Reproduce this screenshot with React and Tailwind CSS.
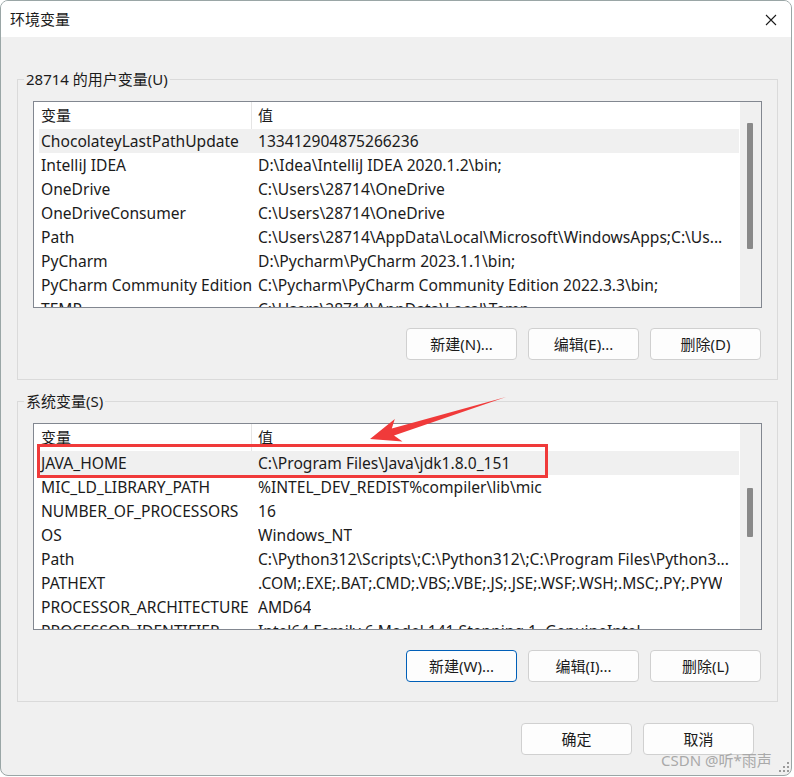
import React from 'react'

const userVars = [
  ['ChocolateyLastPathUpdate', '133412904875266236'],
  ['IntelliJ IDEA', 'D:\\Idea\\IntelliJ IDEA 2020.1.2\\bin;'],
  ['OneDrive', 'C:\\Users\\28714\\OneDrive'],
  ['OneDriveConsumer', 'C:\\Users\\28714\\OneDrive'],
  ['Path', 'C:\\Users\\28714\\AppData\\Local\\Microsoft\\WindowsApps;C:\\Us...'],
  ['PyCharm', 'D:\\Pycharm\\PyCharm 2023.1.1\\bin;'],
  ['PyCharm Community Edition', 'C:\\Pycharm\\PyCharm Community Edition 2022.3.3\\bin;'],
  ['TEMP', 'C:\\Users\\28714\\AppData\\Local\\Temp'],
]

const systemVars = [
  ['JAVA_HOME', 'C:\\Program Files\\Java\\jdk1.8.0_151'],
  ['MIC_LD_LIBRARY_PATH', '%INTEL_DEV_REDIST%compiler\\lib\\mic'],
  ['NUMBER_OF_PROCESSORS', '16'],
  ['OS', 'Windows_NT'],
  ['Path', 'C:\\Python312\\Scripts\\;C:\\Python312\\;C:\\Program Files\\Python3...'],
  ['PATHEXT', '.COM;.EXE;.BAT;.CMD;.VBS;.VBE;.JS;.JSE;.WSF;.WSH;.MSC;.PY;.PYW'],
  ['PROCESSOR_ARCHITECTURE', 'AMD64'],
  ['PROCESSOR_IDENTIFIER', 'Intel64 Family 6 Model 141 Stepping 1, GenuineIntel'],
]

function WinButton({ children, focused, className = '' }) {
  return (
    <button
      className={
        'w-[111px] h-[32px] rounded-[4px] bg-[#fdfdfd] text-[15px] text-[#1b1b1b] flex items-center justify-center ' +
        (focused ? 'border border-[#005fb8]' : 'border border-[#d0d0d0]') +
        ' ' + className
      }
    >
      {children}
    </button>
  )
}

function VarList({ rows, thumbTop, thumbHeight }) {
  return (
    <div className="w-[729px] h-[207px] border border-[#828790] bg-white flex overflow-hidden">
      <div className="w-[706px] pr-[1px] overflow-hidden">
        <div className="h-[27px] flex items-center">
          <div className="w-[218px] h-full pl-[7px] flex items-center border-r border-[#e5e5e5]">变量</div>
          <div className="pl-[6px]">值</div>
        </div>
        {rows.map(([name, value], i) => (
          <div
            key={name + i}
            className={'ml-[5px] h-[24px] pt-[2px] flex items-center whitespace-nowrap text-[15.6px] ' + (i === 0 ? 'bg-[#f0f0f0]' : '')}
          >
            <div className="w-[219px] shrink-0 pl-[2px] overflow-hidden">{name}</div>
            <div className="overflow-hidden">{value}</div>
          </div>
        ))}
      </div>
      <div className="w-[21px] h-full bg-[#f0f0f0] flex flex-col">
        <div
          className="ml-[7px] w-[6px] bg-[#8a8a8a] rounded-[1px]"
          style={{ marginTop: thumbTop, height: thumbHeight }}
        />
      </div>
    </div>
  )
}

function Group({ label, rows, thumbTop, thumbHeight, buttons, className = '' }) {
  return (
    <fieldset className={'ml-[16px] w-[761px] border border-[#dadada] pl-[15px] pr-[15px] pt-[12px] pb-[19px] ' + className}>
      <legend className="ml-[-9px] px-[2px] leading-[20px]">{label}</legend>
      <VarList rows={rows} thumbTop={thumbTop} thumbHeight={thumbHeight} />
      <div className="mt-[20px] w-[729px] pr-[1px] flex justify-end gap-[11px]">
        {buttons.map((b, i) => (
          <WinButton key={b} focused={label.startsWith('系统') && i === 0}>{b}</WinButton>
        ))}
      </div>
    </fieldset>
  )
}

export default function App() {
  return (
    <div
      className="w-[794px] h-[777px] bg-white relative text-[15px] text-[#1b1b1b]"
      style={{ fontFamily: '"Noto Sans", "Noto Sans CJK SC", sans-serif' }}
    >
      <div className="w-[792px] h-[776px] rounded-[8px] border border-[#9aa6a6] bg-[#f0f0f0] overflow-hidden flex flex-col">
        <div className="h-[36px] bg-white flex items-center justify-between pl-[9px] pr-[14px] shrink-0">
          <span className="text-[15px]">环境变量</span>
          <svg width="12" height="12" viewBox="0 0 12 12" className="mt-[1px]">
            <path d="M1 1 L11 11 M11 1 L1 11" stroke="#1b1b1b" strokeWidth="1.1" fill="none" />
          </svg>
        </div>

        <div className="pt-[32px] flex flex-col">
          <Group
            label="28714 的用户变量(U)"
            rows={userVars}
            thumbTop={21}
            thumbHeight={126}
            buttons={['新建(N)...', '编辑(E)...', '删除(D)']}
          />
          <Group
            label="系统变量(S)"
            rows={systemVars}
            thumbTop={64}
            thumbHeight={49}
            buttons={['新建(W)...', '编辑(I)...', '删除(L)']}
            className="mt-[11px]"
          />
          <div className="mt-[21px] pr-[37px] flex justify-end gap-[11px]">
            <WinButton>确定</WinButton>
            <WinButton>取消</WinButton>
          </div>
        </div>
      </div>

      {/* annotation overlay */}
      <div className="absolute left-[37px] top-[444px] w-[511px] h-[34px] border-[3px] border-[#f03a3a] pointer-events-none" />
      <svg className="absolute left-0 top-0 pointer-events-none" width="794" height="777">
        <polygon
          points="370,439 402.5,441.5 394,435.4 506,397 391.8,428.4 394.8,418.9"
          fill="#f03a3a"
        />
      </svg>

      <div className="absolute left-[661px] top-[749px] text-[15px] text-[#a9a9a9] whitespace-nowrap">CSDN @听*雨声</div>
      <svg className="absolute left-[779px] top-[762px]" width="11" height="11" viewBox="0 0 11 11">
        <g fill="#9a9a9a">
          <rect x="8" y="0" width="2" height="2" />
          <rect x="4" y="4" width="2" height="2" />
          <rect x="8" y="4" width="2" height="2" />
          <rect x="0" y="8" width="2" height="2" />
          <rect x="4" y="8" width="2" height="2" />
          <rect x="8" y="8" width="2" height="2" />
        </g>
      </svg>
    </div>
  )
}
